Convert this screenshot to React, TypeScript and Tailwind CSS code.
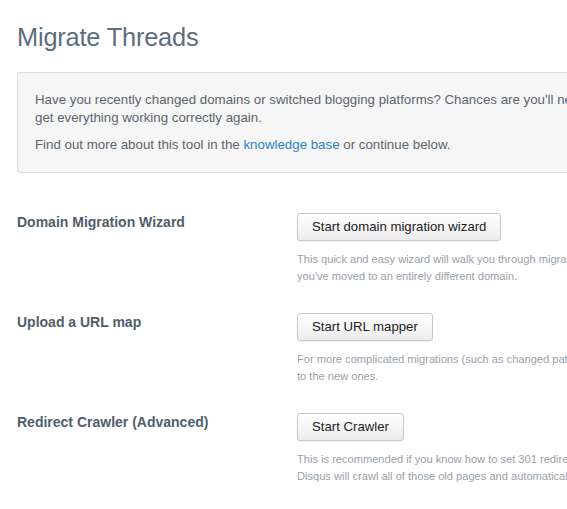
import React from "react";

type Tool = {
  title: string;
  button: string;
  lines: string[];
};

const tools: Tool[] = [
  {
    title: "Domain Migration Wizard",
    button: "Start domain migration wizard",
    lines: [
      "This quick and easy wizard will walk you through migrating your threads if",
      "you've moved to an entirely different domain.",
    ],
  },
  {
    title: "Upload a URL map",
    button: "Start URL mapper",
    lines: [
      "For more complicated migrations (such as changed paths), you can upload a URL map that maps old URLs",
      "to the new ones.",
    ],
  },
  {
    title: "Redirect Crawler (Advanced)",
    button: "Start Crawler",
    lines: [
      "This is recommended if you know how to set 301 redirects from your old URLs to the new ones.",
      "Disqus will crawl all of those old pages and automatically update your threads.",
    ],
  },
];

const App: React.FC = () => {
  return (
    <div className="w-screen min-h-screen overflow-hidden bg-white font-['Liberation_Sans',Arial,sans-serif]">
      <div className="w-[960px] pl-[17px] pt-[20px]">
        <h1 className="text-[25.4px] leading-[34px] font-normal text-[#5d6d7d] tracking-[-0.2px]">
          Migrate Threads
        </h1>

        <div className="mt-[18px] rounded-[3px] border border-[#dcdcdc] bg-[#f6f6f6] px-[17px] py-[18px] text-[13.3px] leading-[18px] text-[#5a646e]">
          <p className="whitespace-nowrap">
            Have you recently changed domains or switched blogging platforms? Chances are you'll need to migrate your threads to
            <br />
            get everything working correctly again.
          </p>
          <p className="mt-[9px] whitespace-nowrap">
            Find out more about this tool in the{" "}
            <a href="#" className="text-[#2a82c6]">
              knowledge base
            </a>{" "}
            or continue below.
          </p>
        </div>

        <div className="mt-[40px] flex flex-col gap-[28px]">
          {tools.map((t) => (
            <div key={t.title} className="grid grid-cols-[280px_1fr]">
              <div className="text-[14px] leading-[18px] font-bold text-[#4f5e6c]">
                {t.title}
              </div>
              <div>
                <button
                  type="button"
                  className="h-[28px] rounded-[3px] border border-[#c8c8c8] bg-gradient-to-b from-white to-[#ececec] px-[14px] text-[13.2px] text-[#222] shadow-[0_1px_1px_rgba(0,0,0,0.06)]"
                >
                  {t.button}
                </button>
                <p className="mt-[10px] whitespace-nowrap text-[11.1px] leading-[17px] text-[#98a1a9]">
                  {t.lines[0]}
                  <br />
                  {t.lines[1]}
                </p>
              </div>
            </div>
          ))}
        </div>
      </div>
    </div>
  );
};

export default App;
